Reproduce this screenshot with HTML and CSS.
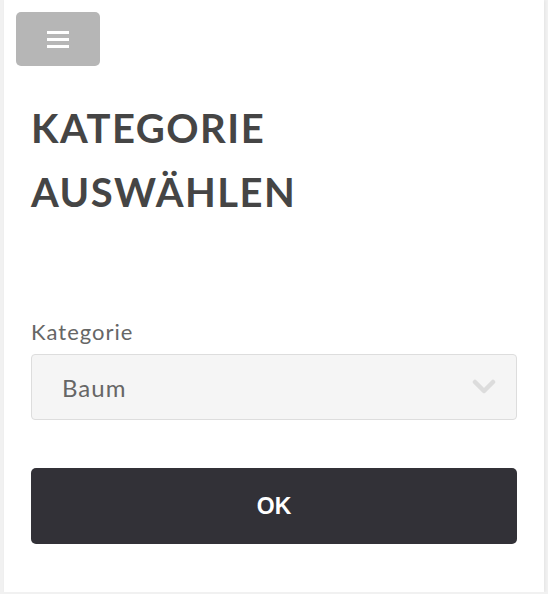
FILE: index.html
```html
<!DOCTYPE html>
<html lang="de">
<head>
<meta charset="utf-8">
<link rel="stylesheet" href="styles.css">
</head>
<body>
<div class="card">
  <div class="topbar">
    <button class="menu-btn" aria-label="Menü">
      <span class="bar"></span><span class="bar"></span><span class="bar"></span>
    </button>
  </div>
  <div class="content">
    <h1 class="title">KATEGORIE AUSWÄHLEN</h1>
    <label class="label">Kategorie</label>
    <div class="select">
      <span class="select-value">Baum</span>
      <svg class="chevron" width="24" height="16" viewBox="0 0 24 16"><polyline points="3,3 12,12 21,3" fill="none" stroke="#dcdcdc" stroke-width="4.5" stroke-linecap="round" stroke-linejoin="round"/></svg>
    </div>
    <button class="ok-btn">OK</button>
  </div>
</div>
</body>
</html>
```
FILE: styles.css
```css
html, body {
  margin: 0;
  padding: 0;
  background: #f1f1f1;
}
body {
  font-family: Lato, "Open Sans", sans-serif;
}
.card {
  margin: 0 4px;
  background: #ffffff;
  height: 592px;
  box-shadow: 1px 0 3px rgba(0,0,0,0.06);
  box-sizing: border-box;
}
.topbar {
  padding: 12px 0 0 12px;
}
.menu-btn {
  width: 84px;
  height: 54px;
  border: none;
  border-radius: 5px;
  background: #b6b6b6;
  display: flex;
  flex-direction: column;
  align-items: center;
  justify-content: center;
  gap: 4px;
  padding: 0;
}
.bar {
  display: block;
  width: 22px;
  height: 3px;
  background: #ffffff;
}
.content {
  padding: 0 27px 0 27px;
}
.title {
  margin: 30px 0 0 0;
  font-size: 40px;
  line-height: 64px;
  font-weight: 700;
  letter-spacing: 1.5px;
  color: #454545;
  width: 340px;
}
.label {
  display: block;
  margin-top: 96px;
  font-size: 22px;
  line-height: 24px;
  letter-spacing: 1px;
  color: #666666;
}
.select {
  margin-top: 10px;
  height: 66px;
  box-sizing: border-box;
  border: 1px solid #dddddd;
  border-radius: 4px;
  background: #f5f5f5;
  display: flex;
  align-items: center;
  justify-content: space-between;
  padding: 0 20px 0 30px;
}
.select-value {
  font-size: 24px;
  letter-spacing: 1px;
  color: #666666;
}
.chevron {
  display: block;
}
.ok-btn {
  display: block;
  width: 100%;
  margin-top: 48px;
  height: 76px;
  border: none;
  border-radius: 5px;
  background: #323137;
  color: #ffffff;
  font-family: "Liberation Sans", Arial, sans-serif;
  font-weight: 700;
  font-size: 23px;
}
```
